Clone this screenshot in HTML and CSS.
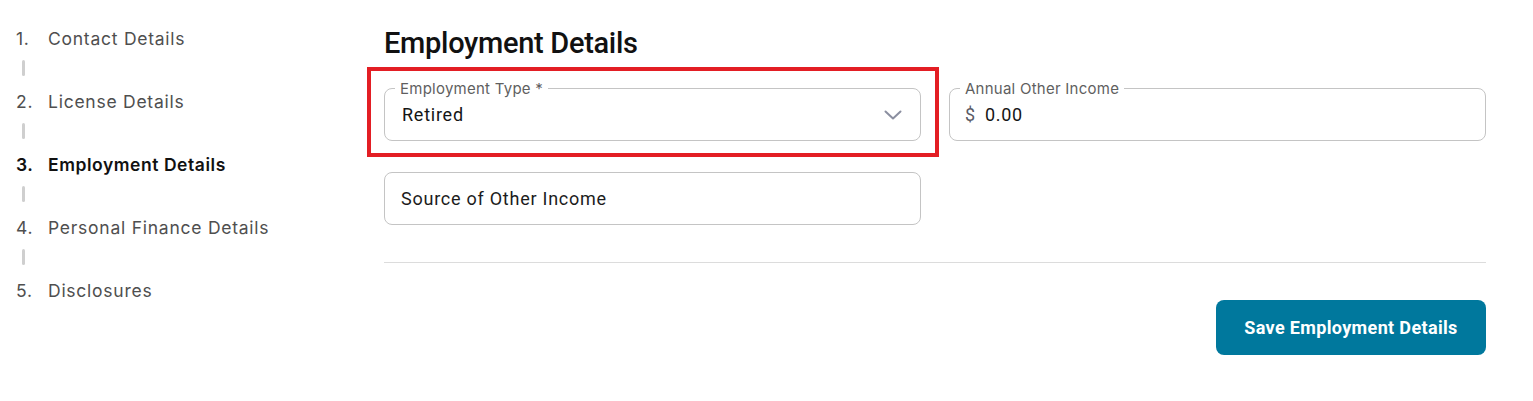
FILE: index.html
```html
<!DOCTYPE html>
<html lang="en">
<head>
<meta charset="utf-8">
<title>Employment Details</title>
<link rel="stylesheet" href="styles.css">
</head>
<body>
<div class="page">
  <nav class="steps">
    <div class="step"><span class="num">1.</span><span class="label">Contact Details</span></div>
    <div class="connector"></div>
    <div class="step"><span class="num">2.</span><span class="label">License Details</span></div>
    <div class="connector"></div>
    <div class="step active"><span class="num">3.</span><span class="label">Employment Details</span></div>
    <div class="connector"></div>
    <div class="step"><span class="num">4.</span><span class="label">Personal Finance Details</span></div>
    <div class="connector"></div>
    <div class="step"><span class="num">5.</span><span class="label">Disclosures</span></div>
  </nav>
  <main class="main">
    <h1 class="title">Employment Details</h1>
    <div class="grid">
      <div class="highlight">
        <div class="field">
          <span class="field-label">Employment Type *</span>
          <span class="value">Retired</span>
          <svg class="chevron" width="18" height="10" viewBox="0 0 18 10"><path d="M1.5 1.5 L9 8.5 L16.5 1.5" fill="none" stroke="#8b8fa0" stroke-width="2" stroke-linecap="round" stroke-linejoin="round"/></svg>
        </div>
      </div>
      <div class="field">
        <span class="field-label">Annual Other Income</span>
        <span class="prefix">$</span><span class="value">0.00</span>
      </div>
      <div class="field">
        <span class="placeholder">Source of Other Income</span>
      </div>
    </div>
    <hr class="divider">
    <div class="actions">
      <button class="save">Save Employment Details</button>
    </div>
  </main>
</div>
</body>
</html>
```

FILE: styles.css
```css
html, body {
  margin: 0;
  padding: 0;
  background: #ffffff;
}

.page {
  display: flex;
  align-items: flex-start;
}

.steps {
  width: 368px;
  padding: 26px 0 0 16px;
  display: flex;
  flex-direction: column;
  font-family: Inter, "Noto Sans", sans-serif;
}

.step {
  display: flex;
  align-items: center;
  height: 24px;
  font-size: 17.5px;
  color: #4f4f4f;
  letter-spacing: 0.75px;
}

.step .num {
  width: 32px;
}

.step.active {
  color: #111111;
  font-weight: 600;
  letter-spacing: 0.55px;
}

.connector {
  width: 3px;
  height: 16px;
  margin: 10px 0 13px 6px;
  border-radius: 2px;
  background: #cfcfcf;
}

.main {
  width: 1102px;
  font-family: Roboto, "Liberation Sans", sans-serif;
}

.title {
  margin: 26px 0 0 0;
  font-size: 29px;
  line-height: 34px;
  font-weight: 500;
  color: #111111;
  letter-spacing: -0.3px;
}

.grid {
  margin-top: 28px;
  display: grid;
  grid-template-columns: 537px 537px;
  column-gap: 28px;
  row-gap: 31px;
}

.highlight {
  position: relative;
}

.highlight::after {
  content: "";
  position: absolute;
  left: -17px;
  top: -21px;
  right: -18px;
  bottom: -16px;
  border: 4px solid #e31e24;
  pointer-events: none;
}

.field {
  position: relative;
  box-sizing: border-box;
  height: 53px;
  border: 1px solid #c4c4c4;
  border-radius: 8px;
  display: flex;
  align-items: center;
  padding: 0 16px 0 17px;
  font-size: 18px;
  color: #151515;
  letter-spacing: 0.75px;
}

.field-label {
  position: absolute;
  left: 10px;
  top: -9px;
  padding: 0 5px;
  background: #ffffff;
  font-family: Inter, "Noto Sans", sans-serif;
  font-size: 15px;
  line-height: 18px;
  color: #5f5f5f;
  letter-spacing: 0.25px;
}

.value {
  flex: 1;
}

.prefix {
  color: #5a5a66;
  margin-right: 9px;
  margin-left: -2px;
}

.chevron {
  margin-right: 2px;
}

.placeholder {
  color: #1c1c1c;
  margin-left: -1px;
}

.divider {
  margin: 37px 0 0 0;
  border: none;
  border-top: 1px solid #dcdcdc;
}

.actions {
  display: flex;
  justify-content: flex-end;
  margin-top: 37px;
}

.save {
  width: 270px;
  height: 55px;
  border: none;
  border-radius: 8px;
  background: #00789d;
  color: #ffffff;
  font-family: Roboto, "Liberation Sans", sans-serif;
  font-size: 18px;
  font-weight: 700;
  letter-spacing: 0.35px;
  cursor: pointer;
}
```
